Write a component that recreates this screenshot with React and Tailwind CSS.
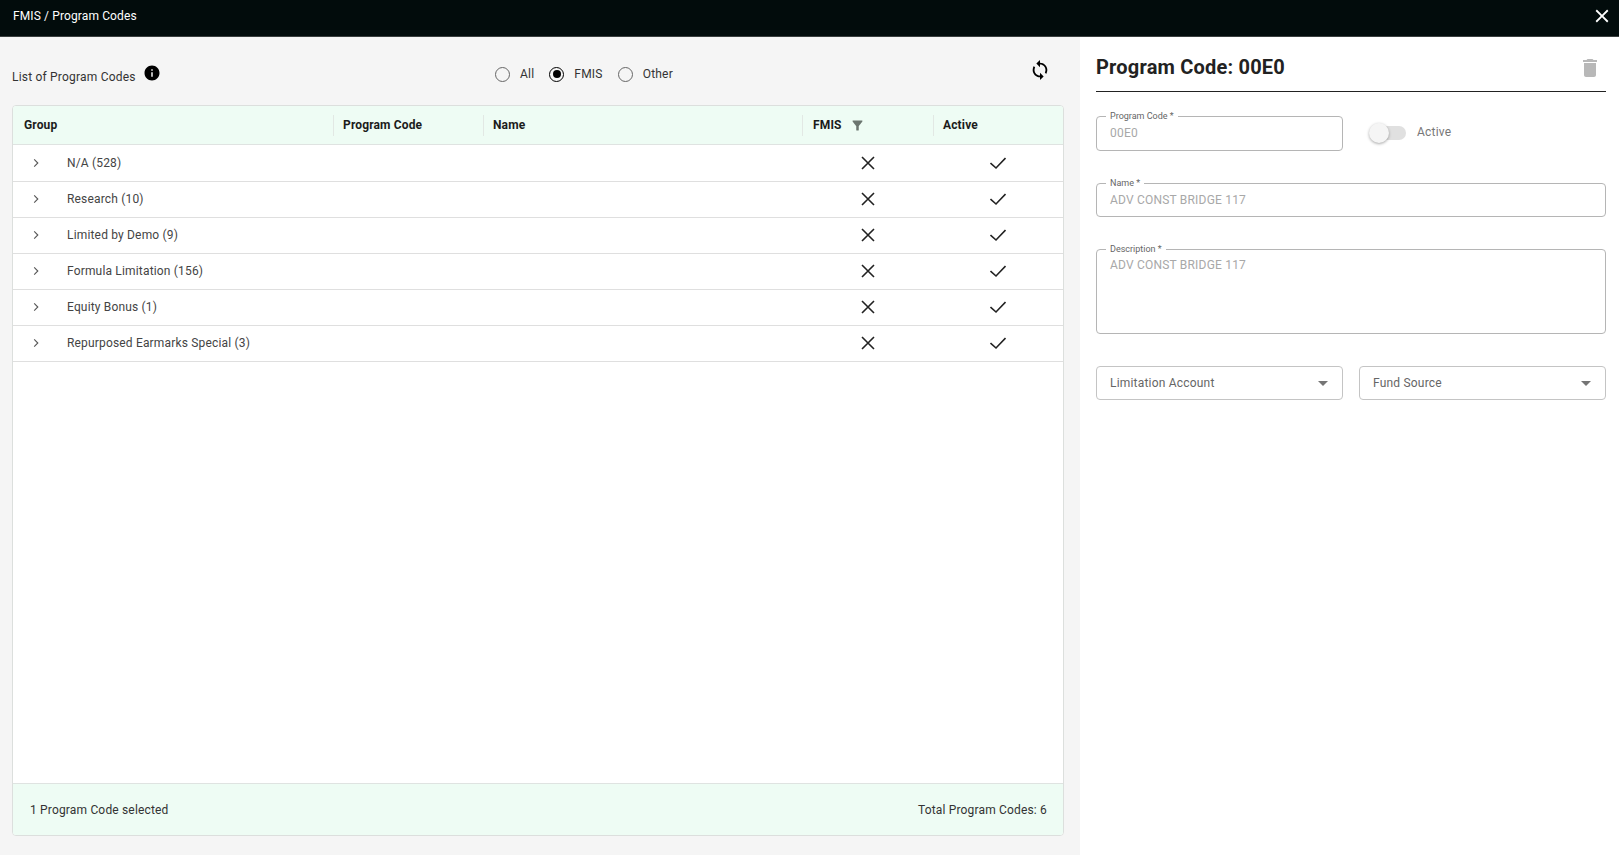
import React from 'react';

const groups = [
  'N/A (528)',
  'Research (10)',
  'Limited by Demo (9)',
  'Formula Limitation (156)',
  'Equity Bonus (1)',
  'Repurposed Earmarks Special (3)',
];

const Icon = ({ d, className }) => (
  <svg viewBox="0 0 24 24" fill="currentColor" className={className}>
    <path d={d} />
  </svg>
);

const LineIcon = ({ d, className }) => (
  <svg viewBox="0 0 16 16" fill="none" stroke="currentColor" strokeWidth="1.6" className={className}>
    <path d={d} />
  </svg>
);

const CLOSE = 'M19 6.41 17.59 5 12 10.59 6.41 5 5 6.41 10.59 12 5 17.59 6.41 19 12 13.41 17.59 19 19 17.59 13.41 12z';
const INFO = 'M12 2C6.48 2 2 6.48 2 12s4.48 10 10 10 10-4.48 10-10S17.52 2 12 2zm1 15h-2v-6h2v6zm0-8h-2V7h2v2z';
const SYNC = 'M12 4V1L8 5l4 4V6c3.31 0 6 2.69 6 6 0 1.01-.25 1.97-.7 2.8l1.46 1.46C19.54 15.03 20 13.57 20 12c0-4.42-3.58-8-8-8zm0 14c-3.31 0-6-2.69-6-6 0-1.01.25-1.97.7-2.8L5.24 7.74C4.46 8.97 4 10.43 4 12c0 4.42 3.58 8 8 8v3l4-4-4-4v3z';
const TRASH = 'M6 19c0 1.1.9 2 2 2h8c1.1 0 2-.9 2-2V7H6v12zM19 4h-3.5l-1-1h-5l-1 1H5v2h14V4z';
const FILTER = 'M4.25 5.61C6.27 8.2 10 13 10 13v6c0 .55.45 1 1 1h2c.55 0 1-.45 1-1v-6s3.72-4.8 5.74-7.39c.51-.66.04-1.61-.79-1.61H5.04c-.83 0-1.3.95-.79 1.61z';
const DROP = 'M7 10l5 5 5-5z';

const Radio = ({ label, checked }) => (
  <div className="flex items-center gap-[10px]">
    <span
      className={`flex h-[15px] w-[15px] items-center justify-center rounded-full border-[1.5px] ${
        checked ? 'border-black' : 'border-[#666]'
      }`}
    >
      {checked && <span className="h-[8px] w-[8px] rounded-full bg-black" />}
    </span>
    <span className="text-[12px] tracking-[0.2px] text-[#333]">{label}</span>
  </div>
);

const HeaderCell = ({ children, className }) => (
  <div className={`flex h-full items-center ${className}`}>
    <div className="flex h-[21px] w-full items-center gap-2 border-l border-[#e2e8e4] pl-[9px] text-[12px] font-bold tracking-[0.15px] text-[#1b1b1b]">
      {children}
    </div>
  </div>
);

const Field = ({ label, value, className }) => (
  <div className={`relative rounded border border-[#b5b5b5] px-[13px] text-[12px] tracking-[0.2px] text-[#a8a8a8] ${className}`}>
    <span className="absolute -top-[6px] left-[9px] bg-white px-1 text-[9px] leading-[11px] tracking-normal text-[#666]">
      {label}
    </span>
    {value}
  </div>
);

const SelectField = ({ label }) => (
  <div className="flex h-[34px] flex-1 items-center justify-between rounded border border-[#c4c4c4] pl-[13px] pr-[7px] text-[12px] tracking-[0.2px] text-[#666]">
    {label}
    <Icon d={DROP} className="h-6 w-6 text-[#757575]" />
  </div>
);

const App = () => {
  return (
    <div className="flex h-screen flex-col overflow-hidden bg-white font-['Roboto',sans-serif]">
      <div className="flex h-[37px] shrink-0 items-center justify-between border-b border-[#3a3f3f] bg-[#020c0c] pb-[4px] pl-[13px] pr-[6px] text-[12px] tracking-[0.12px] text-white">
        FMIS / Program Codes
        <Icon d={CLOSE} className="h-[22px] w-[22px]" />
      </div>

      <div className="flex min-h-0 flex-1">
        <div className="flex w-[1080px] shrink-0 flex-col bg-[#f5f5f5] pb-[19px] pl-3 pr-4">
          <div className="relative flex h-[68px] shrink-0 items-center justify-center">
            <div className="absolute left-0 top-[29px] flex items-center gap-[7px]">
              <span className="mt-[2px] text-[12px] tracking-[0.2px] text-[#333]">List of Program Codes</span>
              <Icon d={INFO} className="-mt-[7px] h-[18px] w-[18px] text-black" />
            </div>
            <div className="ml-[92px] mt-[6px] flex gap-[15px]">
              <Radio label="All" />
              <Radio label="FMIS" checked />
              <Radio label="Other" />
            </div>
            <Icon d={SYNC} className="absolute right-[13px] top-[22px] h-[22px] w-[22px] text-black" />
          </div>

          <div className="flex min-h-0 flex-1 flex-col overflow-hidden rounded border border-[#dcdfdd] bg-white">
            <div className="flex h-[39px] shrink-0 items-center border-b border-[#dfe3e1] bg-[#eefcf4]">
              <div className="w-[320px] pl-[11px] text-[12px] font-bold tracking-[0.15px] text-[#1b1b1b]">Group</div>
              <HeaderCell className="w-[150px]">Program Code</HeaderCell>
              <HeaderCell className="w-[319px]">Name</HeaderCell>
              <HeaderCell className="w-[131px]">
                <span className="ml-[1px]">FMIS</span>
                <Icon d={FILTER} className="h-[15px] w-[15px] text-[#6b756f]" />
              </HeaderCell>
              <HeaderCell className="flex-1">Active</HeaderCell>
            </div>

            <div className="flex-1 pt-[1px]">
              {groups.map((group) => (
                <div key={group} className="flex h-[36px] items-center border-b border-[#dfdfdf] pb-[2px] text-[12px] tracking-[0.17px] text-[#444]">
                  <div className="flex w-[790px] items-center">
                    <svg viewBox="0 0 10 10" fill="none" stroke="#555" strokeWidth="1.1" className="ml-[18px] h-[10px] w-[10px]">
                      <path d="M3.2 1.4 6.8 5 3.2 8.6" />
                    </svg>
                    <span className="ml-[26px]">{group}</span>
                  </div>
                  <div className="flex w-[131px] justify-center">
                    <LineIcon d="M2 2 14 14M14 2 2 14" className="ml-[-2px] h-[16px] w-[16px] text-[#222]" />
                  </div>
                  <div className="flex flex-1 justify-center">
                    <LineIcon d="M0.5 8 6 13 15.5 3" className="ml-[-2px] h-[16px] w-[16px] text-[#222]" />
                  </div>
                </div>
              ))}
            </div>

            <div className="flex h-[52px] shrink-0 items-center justify-between border-t border-[#dfe3e1] bg-[#eefcf4] pl-[17px] pr-4 text-[12px] tracking-[0.17px] text-[#333]">
              <span>1 Program Code selected</span>
              <span>Total Program Codes: 6</span>
            </div>
          </div>
        </div>

        <div className="flex-1 pl-[16px] pr-[13px]">
          <div className="flex h-[55px] items-center justify-between border-b border-[#222] pr-[4px] pt-[6px]">
            <h1 className="text-[20px] font-bold tracking-[0.2px] text-[#222]">Program Code: 00E0</h1>
            <Icon d={TRASH} className="mt-[1px] h-6 w-6 text-[#b8b8b8]" />
          </div>

          <div className="mt-[24px] flex items-center gap-[27px]">
            <Field label="Program Code *" value="00E0" className="flex h-[35px] w-[247px] items-center pb-[1px]" />
            <div className="-mt-[2px] flex items-center gap-[11px]">
              <div className="relative h-[14px] w-[36px] rounded-full bg-[#e0e0e0]">
                <span className="absolute -left-[1px] -top-[3px] h-5 w-5 rounded-full bg-[#f5f5f5] shadow-[0_1px_3px_rgba(0,0,0,0.35)]" />
              </div>
              <span className="mb-[2px] text-[12px] tracking-[0.2px] text-[#777]">Active</span>
            </div>
          </div>

          <Field label="Name *" value="ADV CONST BRIDGE 117" className="mt-[32px] flex h-[34px] items-center" />
          <Field label="Description *" value="ADV CONST BRIDGE 117" className="mt-[32px] h-[85px] pt-[6px]" />

          <div className="mt-[32px] flex gap-4">
            <SelectField label="Limitation Account" />
            <SelectField label="Fund Source" />
          </div>
        </div>
      </div>
    </div>
  );
};

export default App;
